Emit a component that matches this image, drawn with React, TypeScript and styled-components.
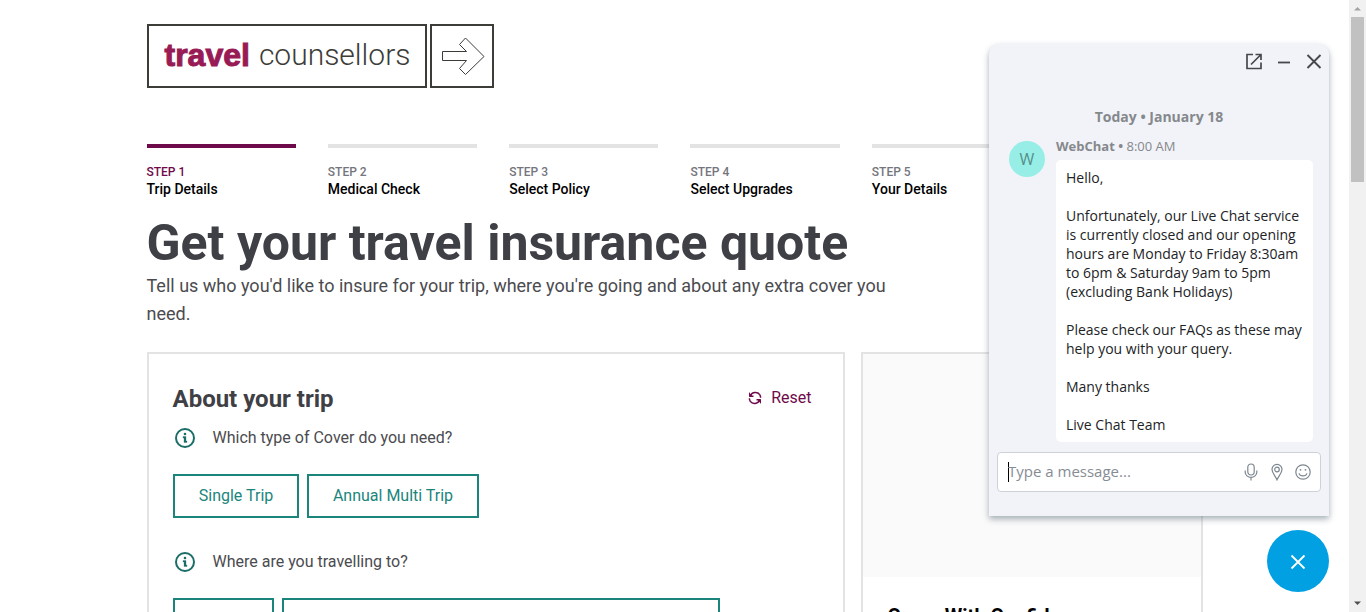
import React from 'react';
import styled, { createGlobalStyle } from 'styled-components';

const GlobalStyle = createGlobalStyle`
  * { box-sizing: border-box; }
  body { margin: 0; background: #fff; font-family: Roboto, sans-serif; color: #4b4b4f; }
  h1, h2, h3, p, ol { margin: 0; padding: 0; }
  button, input { font: inherit; }
  button { cursor: pointer; }
`;

const Shell = styled.div`
  display: flex;
  height: 100vh;
  overflow: hidden;
`;

const Page = styled.div`
  position: relative;
  flex: 1;
  min-width: 0;
  overflow: hidden;
`;

const Container = styled.main`
  max-width: 1056px;
  margin: 0 auto;
  padding-top: 24px;
`;

const Logo = styled.a`
  display: flex;
  gap: 3px;
  width: max-content;
  color: #3c3c38;
  text-decoration: none;
`;

const LogoBox = styled.span<{ $width: number }>`
  display: flex;
  align-items: center;
  justify-content: center;
  gap: 9px;
  width: ${(p) => p.$width}px;
  height: 64px;
  padding-left: 2px;
  border: 2px solid #3c3c38;
`;

const LogoWord = styled.span<{ $bold?: boolean }>`
  padding-bottom: 2px;
  font-family: ${(p) => (p.$bold ? "'Liberation Sans', sans-serif" : 'Roboto, sans-serif')};
  font-size: ${(p) => (p.$bold ? 32 : 30)}px;
  line-height: 36px;
  font-weight: ${(p) => (p.$bold ? 700 : 300)};
  color: ${(p) => (p.$bold ? '#981b55' : '#3c3c38')};
  -webkit-text-stroke: ${(p) => (p.$bold ? '1px #981b55' : '0')};
`;

const Steps = styled.ol`
  display: grid;
  grid-template-columns: repeat(6, 1fr);
  gap: 32px;
  margin-top: 56px;
  list-style: none;
`;

const Step = styled.li<{ $active?: boolean }>`
  border-top: 4px solid ${(p) => (p.$active ? '#6f0a4a' : '#e3e3e3')};
  padding-top: 16px;
  color: #000;
  font-weight: 500;
  font-size: 14px;
  line-height: 18px;
`;

const StepNumber = styled.div<{ $active?: boolean }>`
  font-size: 12px;
  line-height: 16px;
  color: ${(p) => (p.$active ? '#6f0a4a' : '#75757d')};
`;

const Title = styled.h1`
  margin-top: 16px;
  font-size: 50px;
  line-height: 58px;
  font-weight: 700;
  color: #3f4046;
  white-space: nowrap;
`;

const Intro = styled.p`
  max-width: 768px;
  font-size: 18px;
  line-height: 28px;
`;

const Columns = styled.div`
  display: grid;
  grid-template-columns: minmax(0, 1fr) 342px;
  gap: 16px;
  margin-top: 24px;
`;

const Card = styled.section`
  border: 2px solid #e3e3e3;
  padding: 31px 24px;
`;

const CardHeader = styled.div`
  display: flex;
  align-items: flex-start;
  justify-content: space-between;
  padding-right: 7px;
`;

const CardTitle = styled.h2`
  font-size: 24px;
  line-height: 28px;
  font-weight: 700;
  color: #3f4046;
`;

const ResetButton = styled.button`
  display: flex;
  align-items: center;
  gap: 9px;
  border: 0;
  padding: 0;
  background: none;
  color: #6f0a4a;
  font-size: 16px;
  line-height: 26px;
`;

const Question = styled.div`
  display: flex;
  align-items: center;
  gap: 16px;
  margin-top: 13px;
  font-size: 16px;
  line-height: 22px;
`;

const Options = styled.div`
  display: flex;
  gap: 8px;
  margin-top: 24px;
  margin-bottom: 32px;
`;

const OptionButton = styled.button<{ $width: number }>`
  width: ${(p) => p.$width}px;
  height: 44px;
  padding: 0 0 2px 1px;
  border: 2px solid #1b857c;
  background: #fff;
  color: #1b857c;
  font-size: 16px;
`;

const SideCard = styled.aside`
  border: 2px solid #e3e3e3;
`;

const SideImage = styled.div`
  height: 223px;
  background: #fafafa;
`;

const SideTitle = styled.h3`
  padding: 25px;
  font-size: 20px;
  line-height: 28px;
  color: #000;
`;

const ChatDock = styled.div`
  position: absolute;
  right: 20px;
  bottom: 20px;
  display: flex;
  flex-direction: column;
  align-items: flex-end;
  gap: 14px;
  font-family: 'Open Sans', sans-serif;
`;

const ChatPanel = styled.section`
  width: 340px;
  padding: 6px 8px 24px;
  border-radius: 10px 10px 0 0;
  background: #f2f3f8;
  box-shadow: 0 3px 6px rgba(70, 90, 105, 0.48);
`;

const ChatActions = styled.div`
  display: flex;
  justify-content: flex-end;
  gap: 6px;
  margin-right: -5px;
`;

const IconButton = styled.button`
  display: flex;
  align-items: center;
  justify-content: center;
  width: 24px;
  height: 24px;
  padding: 0;
  border: 0;
  background: none;
  color: #45484c;
`;

const ChatDate = styled.div`
  margin-top: 33px;
  text-align: center;
  font-size: 14px;
  line-height: 20px;
  font-weight: 700;
  color: #85888c;
`;

const Message = styled.div`
  display: flex;
  gap: 11px;
  margin: 10px 8px 0 12px;
`;

const Avatar = styled.div`
  flex: none;
  width: 36px;
  height: 36px;
  margin-top: 4px;
  border-radius: 50%;
  background: #96eee6;
  color: #568e8b;
  text-align: center;
  font-size: 16px;
  line-height: 36px;
`;

const MessageBody = styled.div`
  flex: 1;
`;

const Sender = styled.div`
  font-size: 13px;
  line-height: 18px;
  margin-bottom: 5px;
  color: #85888c;
`;

const Bubble = styled.div`
  display: flex;
  flex-direction: column;
  gap: 19px;
  padding: 8px 10px;
  border-radius: 5px;
  background: #fff;
  color: #222326;
  font-size: 14px;
  line-height: 19px;
`;

const Composer = styled.div`
  display: flex;
  align-items: center;
  gap: 2px;
  height: 40px;
  margin-top: 10px;
  padding: 0 5px 0 10px;
  border: 1px solid #cdd2d8;
  border-radius: 4px;
  background: #fff;
`;

const Caret = styled.span`
  flex: none;
  width: 1px;
  height: 20px;
  margin-right: -3px;
  background: #000;
`;

const MessageInput = styled.input`
  flex: 1;
  min-width: 0;
  padding: 0 0 2px;
  border: 0;
  outline: 0;
  background: none;
  font-size: 15px;
  line-height: 20px;
  &::placeholder { color: #868c94; opacity: 1; }
`;

const ComposerButton = styled(IconButton)`
  color: #7d8790;
`;

const ChatToggle = styled.button`
  display: flex;
  align-items: center;
  justify-content: center;
  width: 62px;
  height: 62px;
  padding: 2px 0 0;
  border: 0;
  border-radius: 50%;
  background: #00a0e3;
  color: #fff;
`;

const ScrollBar = styled.div`
  display: flex;
  flex-direction: column;
  align-items: center;
  width: 17px;
  background: #f1f1f1;
`;

const ScrollArrow = styled.svg`
  flex: none;
  width: 17px;
  height: 17px;
`;

const ScrollTrack = styled.div`
  flex: 1;
  width: 13px;
`;

const ScrollThumb = styled.div`
  height: 165px;
  background: #c1c1c1;
`;

const InfoIcon = () => (
  <svg width="24" height="24" viewBox="0 0 24 24" fill="none" aria-hidden="true">
    <circle cx="12" cy="12" r="9" stroke="#1b6e68" strokeWidth="2" />
    <path d="M11 7h2v2h-2zM10 10.500h3v4.500h1v1.500h-3v-4.500h-1z" fill="#1b6e68" stroke="#1b6e68" strokeWidth=".3" />
  </svg>
);

const ResetIcon = () => (
  <svg width="14" height="14" viewBox="0 0 14 14" fill="none" stroke="currentColor" strokeWidth="1.5" aria-hidden="true">
    <path d="M1.5 5.2h4M2.4 4.7C4 1 9.500 0.500 11.700 3.700c.7 1 .9 2 .9 3M12.500 8.800h-4M11.600 9.300C10 13 4.500 13.500 2.300 10.300c-.7-1-.9-2-.9-3" />
    <path d="M1 1v4.800h3.500zM13 13V8.200H9.500z" fill="currentColor" stroke="none" />
  </svg>
);

const steps = ['Trip Details', 'Medical Check', 'Select Policy', 'Select Upgrades', 'Your Details'];

export default function App() {
  return (
    <Shell>
      <GlobalStyle />
      <Page>
        <Container>
          <Logo href="#">
            <LogoBox $width={280}>
              <LogoWord $bold>travel</LogoWord>
              <LogoWord>counsellors</LogoWord>
            </LogoBox>
            <LogoBox $width={64}>
              <svg width="44" height="40" viewBox="0 0 44 40" fill="none" stroke="currentColor" aria-hidden="true">
                <path d="M1.500 15.500H25.500L18.500 8.500L24.500 2L43 20.500L24.500 38.500L18.500 32.500L25.500 24.500H1.500Z" />
              </svg>
            </LogoBox>
          </Logo>

          <Steps>
            {steps.map((label, i) => (
              <Step key={label} $active={i === 0}>
                <StepNumber $active={i === 0}>STEP {i + 1}</StepNumber>
                {label}
              </Step>
            ))}
          </Steps>

          <Title>Get your travel insurance quote</Title>
          <Intro>
            Tell us who you'd like to insure for your trip, where you're going and about any extra cover you need.
          </Intro>

          <Columns>
            <Card>
              <CardHeader>
                <CardTitle>About your trip</CardTitle>
                <ResetButton type="button"><ResetIcon />Reset</ResetButton>
              </CardHeader>
              <Question><InfoIcon /><span>Which type of Cover do you need?</span></Question>
              <Options>
                <OptionButton type="button" $width={126}>Single Trip</OptionButton>
                <OptionButton type="button" $width={172}>Annual Multi Trip</OptionButton>
              </Options>
              <Question><InfoIcon /><span>Where are you travelling to?</span></Question>
              <Options>
                <OptionButton type="button" $width={101} aria-label="Country" />
                <OptionButton type="button" $width={438} aria-label="Region" />
              </Options>
            </Card>
            <SideCard>
              <SideImage />
              <SideTitle>Cover With Confidence</SideTitle>
            </SideCard>
          </Columns>
        </Container>

        <ChatDock>
          <ChatPanel aria-label="Chat">
            <ChatActions>
              <IconButton type="button" aria-label="Open in new window">
                <svg width="18" height="18" viewBox="0 0 18 18" fill="none" stroke="currentColor" strokeWidth="1.7">
                  <path d="M8 1.500H2v14h14v-6M6 11.500L15.500 2M10.500 1.500H16v5.500" />
                </svg>
              </IconButton>
              <IconButton type="button" aria-label="Minimise">
                <svg width="14" height="14" viewBox="0 0 14 14" stroke="currentColor" strokeWidth="1.800">
                  <path d="M1 7.500h12" />
                </svg>
              </IconButton>
              <IconButton type="button" aria-label="Close">
                <svg width="16" height="16" viewBox="0 0 16 16" stroke="currentColor" strokeWidth="1.9">
                  <path d="M1.500 1l13 13M14.500 1l-13 13" />
                </svg>
              </IconButton>
            </ChatActions>
            <ChatDate>Today • January 18</ChatDate>
            <Message>
              <Avatar>W</Avatar>
              <MessageBody>
                <Sender><b>WebChat •</b> 8:00 AM</Sender>
                <Bubble>
                  <p>Hello,</p>
                  <p>
                    Unfortunately, our Live Chat service is currently closed and our opening hours are Monday to
                    Friday 8:30am to 6pm &amp; Saturday 9am to 5pm (excluding Bank Holidays)
                  </p>
                  <p>Please check our FAQs as these may help you with your query.</p>
                  <p>Many thanks</p>
                  <p>Live Chat Team</p>
                </Bubble>
              </MessageBody>
            </Message>
            <Composer>
              <Caret />
              <MessageInput aria-label="Message" placeholder="Type a message..." />
              <ComposerButton type="button" aria-label="Record voice">
                <svg width="14" height="18" viewBox="0 0 14 18" fill="none" stroke="currentColor" strokeWidth="1.2">
                  <rect x="3.800" y="1" width="6.400" height="11" rx="3.200" />
                  <path d="M1.200 7.500v1.800a5.800 5 0 0 0 11.600 0V7.500M7 14.300V17.500" />
                </svg>
              </ComposerButton>
              <ComposerButton type="button" aria-label="Share location">
                <svg width="12" height="18" viewBox="0 0 12 18" fill="none" stroke="currentColor" strokeWidth="1.200">
                  <path d="M6 16.800C4.500 13 1 10 1 6.500a5 5.200 0 0 1 10 0C11 10 7.500 13 6 16.800Z" />
                  <circle cx="6" cy="6.500" r="2.300" />
                </svg>
              </ComposerButton>
              <ComposerButton type="button" aria-label="Insert emoji">
                <svg width="16" height="16" viewBox="0 0 16 16" fill="none" stroke="currentColor" strokeWidth="1.200">
                  <circle cx="8" cy="8" r="7.200" />
                  <path d="M4 9.300c1 3.500 7 3.500 8 0" />
                  <circle cx="5.500" cy="5.800" r=".9" fill="currentColor" stroke="none" />
                  <circle cx="10.500" cy="5.800" r=".9" fill="currentColor" stroke="none" />
                </svg>
              </ComposerButton>
            </Composer>
          </ChatPanel>
          <ChatToggle type="button" aria-label="Close chat">
            <svg width="16" height="16" viewBox="0 0 16 16" stroke="currentColor" strokeWidth="1.800">
              <path d="M1.500 1.500l13 13M14.500 1.500l-13 13" />
            </svg>
          </ChatToggle>
        </ChatDock>
      </Page>
      <ScrollBar aria-hidden="true">
        <ScrollArrow viewBox="0 0 17 17"><path d="M5 10.500h7L8.500 7z" fill="#a3a3a3" /></ScrollArrow>
        <ScrollTrack><ScrollThumb /></ScrollTrack>
        <ScrollArrow viewBox="0 0 17 17"><path d="M5 6.500h7L8.500 10z" fill="#505050" /></ScrollArrow>
      </ScrollBar>
    </Shell>
  );
}
